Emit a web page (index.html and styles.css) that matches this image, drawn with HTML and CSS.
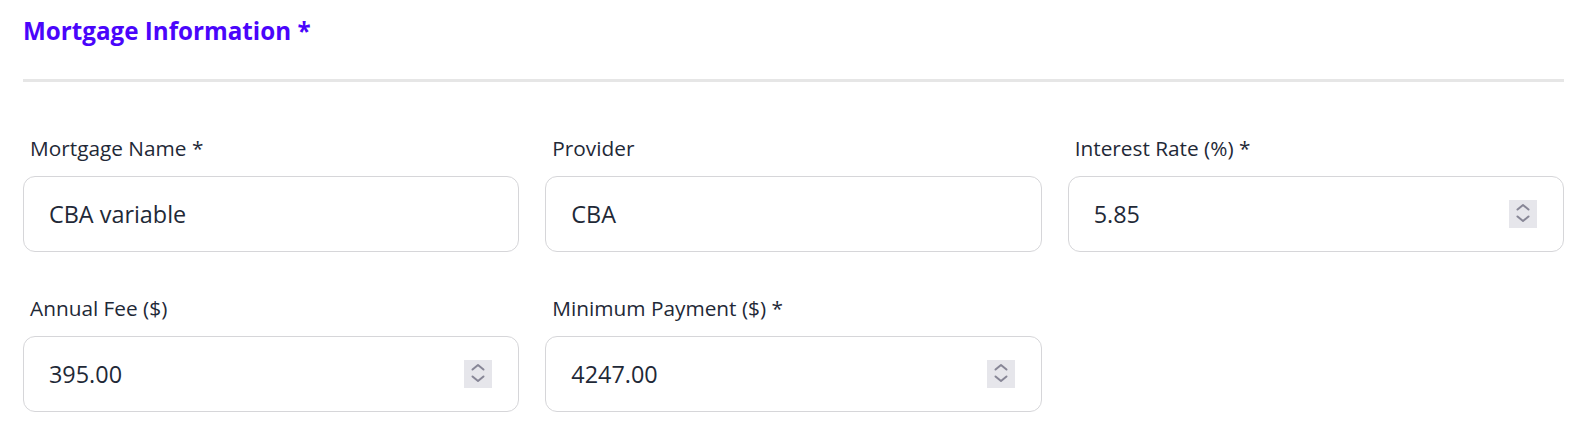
FILE: index.html
```html
<!DOCTYPE html>
<html lang="en">
<head>
<meta charset="utf-8">
<title>Mortgage Information</title>
<link rel="stylesheet" href="styles.css">
</head>
<body>
<section class="section">
  <h2 class="title">Mortgage Information *</h2>
  <hr class="divider">
  <div class="grid">
    <div class="field">
      <label class="label" for="name">Mortgage Name *</label>
      <div class="control"><input class="input" id="name" type="text" value="CBA variable"></div>
    </div>
    <div class="field">
      <label class="label" for="provider">Provider</label>
      <div class="control"><input class="input" id="provider" type="text" value="CBA"></div>
    </div>
    <div class="field">
      <label class="label" for="rate">Interest Rate (%) *</label>
      <div class="control">
        <input class="input" id="rate" type="text" value="5.85">
        <span class="spinner"><svg width="28" height="28" viewBox="0 0 28 28"><path d="M8.5 9.5 L14 5 L19.5 9.5 M8.5 16.5 L14 21 L19.5 16.5" fill="none" stroke="#878696" stroke-width="2" stroke-linecap="round" stroke-linejoin="round"/></svg></span>
      </div>
    </div>
    <div class="field">
      <label class="label" for="fee">Annual Fee ($)</label>
      <div class="control">
        <input class="input" id="fee" type="text" value="395.00">
        <span class="spinner"><svg width="28" height="28" viewBox="0 0 28 28"><path d="M8.5 9.5 L14 5 L19.5 9.5 M8.5 16.5 L14 21 L19.5 16.5" fill="none" stroke="#878696" stroke-width="2" stroke-linecap="round" stroke-linejoin="round"/></svg></span>
      </div>
    </div>
    <div class="field">
      <label class="label" for="min">Minimum Payment ($) *</label>
      <div class="control">
        <input class="input" id="min" type="text" value="4247.00">
        <span class="spinner"><svg width="28" height="28" viewBox="0 0 28 28"><path d="M8.5 9.5 L14 5 L19.5 9.5 M8.5 16.5 L14 21 L19.5 16.5" fill="none" stroke="#878696" stroke-width="2" stroke-linecap="round" stroke-linejoin="round"/></svg></span>
      </div>
    </div>
  </div>
</section>
</body>
</html>
```

FILE: styles.css
```css
html, body {
  margin: 0;
  padding: 0;
  background: #ffffff;
}

body {
  font-family: "Open Sans", "Noto Sans", "Liberation Sans", sans-serif;
  color: #1f2937;
}

.section {
  padding: 14px 22px 0 23px;
}

.title {
  margin: 0;
  font-size: 24.2px;
  line-height: 34px;
  font-weight: 700;
  color: #4a05fb;
}

.divider {
  margin: 31px 0 0 0;
  border: 0;
  height: 3px;
  background: #e6e6e6;
}

.grid {
  margin-top: 53px;
  display: grid;
  grid-template-columns: repeat(3, 1fr);
  column-gap: 26px;
  row-gap: 43px;
}

.field {
  display: flex;
  flex-direction: column;
}

.label {
  font-size: 20.8px;
  line-height: 27px;
  padding-left: 7px;
  margin-bottom: 14px;
  color: #1f2937;
}

.control {
  display: flex;
  align-items: center;
  height: 76px;
  box-sizing: border-box;
  border: 1px solid #d6d6d9;
  border-radius: 12px;
  padding: 0 26px 0 25px;
  background: #fff;
}

.input {
  flex: 1;
  min-width: 0;
  border: 0;
  outline: none;
  padding: 0;
  background: transparent;
  font-family: inherit;
  font-size: 23.4px;
  color: #1f2937;
}

.spinner {
  display: flex;
  width: 28px;
  height: 28px;
  background: #e6e6eb;
}
```
